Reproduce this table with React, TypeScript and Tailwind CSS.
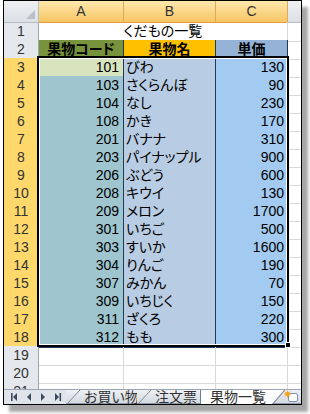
import React from 'react'

// 果物一覧 sheet
const fruits: [number, string, number][] = [
  [101, 'びわ', 130],
  [103, 'さくらんぼ', 90],
  [104, 'なし', 230],
  [108, 'かき', 170],
  [201, 'バナナ', 310],
  [203, 'パイナップル', 900],
  [206, 'ぶどう', 600],
  [208, 'キウイ', 130],
  [209, 'メロン', 1700],
  [301, 'いちご', 500],
  [303, 'すいか', 1600],
  [304, 'りんご', 190],
  [307, 'みかん', 70],
  [309, 'いちじく', 150],
  [311, 'ざくろ', 220],
  [312, 'もも', 300],
]

const ROW = 'grid grid-cols-[35px_85px_92px_72px_13px] h-[18px] shrink-0'

function RowHead({ n, sel }: { n: number; sel?: boolean }) {
  return (
    <div
      className={
        sel
          ? 'text-center leading-[19px] border-r border-b border-r-[#e8a23e] border-b-[#e2b552] bg-[#fed86a] text-[#333]'
          : 'text-center leading-[19px] border-r border-b border-r-[#9aa6b4] border-b-[#bcc4ce] bg-[#e4e7ec] text-[#333]'
      }
    >
      {n}
    </div>
  )
}

function BlankRow({ n }: { n: number }) {
  return (
    <div className={ROW}>
      <RowHead n={n} />
      <div className="border-r border-b border-[#d9d9d9]" />
      <div className="border-r border-b border-[#d9d9d9]" />
      <div className="border-r border-b border-[#d9d9d9]" />
      <div className="border-b border-[#d9d9d9]" />
    </div>
  )
}

function Tab({ label, className }: { label: string; className: string }) {
  return (
    <div className={'relative h-full shrink-0 whitespace-nowrap bg-gradient-to-b from-[#eef1f5] to-[#d3d9e1] border-b border-[#8e9aab] text-[#333] leading-[14px] ' + className}>
      <svg className="absolute left-0 top-0" width="16" height="14">
        <line x1="1" y1="14" x2="14" y2="0" stroke="#7f8b9b" strokeWidth="1" />
      </svg>
      {label}
    </div>
  )
}

export default function App() {
  return (
    <div className="w-[310px] h-[414px] bg-white pl-[3px] overflow-hidden font-['Liberation_Sans','Noto_Sans_CJK_JP',sans-serif] [font-feature-settings:'palt'] text-[14px]">
      <div className="relative w-[299px] h-[405px] border border-black flex flex-col bg-white shadow-[6px_7px_3px_rgba(0,0,0,0.35)]">
        {/* column headers */}
        <div className="grid grid-cols-[35px_85px_92px_72px_13px] h-[21px] shrink-0">
          <div className="relative bg-gradient-to-b from-[#eef0f3] to-[#dce0e5] border-r border-b border-[#b4bcc6]">
            <svg className="absolute right-[3px] bottom-[3px]" width="9" height="9">
              <polygon points="9,0 9,9 0,9" fill="#b9c0c9" />
            </svg>
          </div>
          {['A', 'B', 'C'].map((l) => (
            <div
              key={l}
              className="text-center leading-[21px] bg-gradient-to-b from-[#fde7ac] to-[#f7c662] border-r border-b border-r-[#dcaa58] border-b-[#e69b3c] text-[#333]"
            >
              {l}
            </div>
          ))}
          <div className="bg-gradient-to-b from-[#eef0f3] to-[#dce0e5] border-b border-[#b4bcc6]" />
        </div>

        {/* row 1 */}
        <div className={ROW}>
          <RowHead n={1} />
          <div className="col-span-3 text-center leading-[19px] border-r border-b border-r-[#d9d9d9] border-b-[#1e3a5f] text-black">
            くだもの一覧
          </div>
          <div className="border-b border-[#d9d9d9]" />
        </div>

        {/* row 2 */}
        <div className={ROW}>
          <RowHead n={2} />
          <div className="bg-[#77933c] text-center font-bold leading-[19px] border-r border-b border-[#1e3a5f] text-black">果物コード</div>
          <div className="bg-[#ffc000] text-center font-bold leading-[19px] border-r border-b border-b-[#2f5fc8] border-r-[#1e3a5f] text-black">果物名</div>
          <div className="bg-[#95b3d7] text-center font-bold leading-[19px] border-r border-b border-[#1e3a5f] text-black">単価</div>
          <div className="border-b border-[#d9d9d9]" />
        </div>

        {fruits.map(([code, name, price], i) => (
          <div key={code} className={ROW}>
            <RowHead n={i + 3} sel />
            <div
              className={
                i === 0
                  ? 'bg-[#d7e4bd] text-right pr-[4px] leading-[19px] border-r border-b border-[#1e3a5f] text-black'
                  : 'bg-[#9fc5cf] text-right pr-[4px] leading-[19px] border-r border-b border-[#1e3a5f] text-black'
              }
            >
              {code}
            </div>
            <div className="bg-[#b8cce3] text-left pl-[2px] leading-[19px] border-r border-b border-[#1e3a5f] text-black whitespace-nowrap">
              {name}
            </div>
            <div className="bg-[#a3caf1] text-right pr-[3px] leading-[19px] border-r border-b border-[#1e3a5f] text-black">{price}</div>
            <div className="border-b border-[#d9d9d9]" />
          </div>
        ))}

        <BlankRow n={19} />
        <BlankRow n={20} />
        <div className="flex-1 min-h-0 overflow-hidden">
          <BlankRow n={21} />
        </div>

        {/* sheet tabs */}
        <div className="flex h-[15px] shrink-0 bg-[#dfe4eb] border-t border-[#9aa5b3]">
          <div className="w-[62px] shrink-0 h-full">
            <svg width="62" height="14">
              <rect x="7" y="3" width="1.6" height="8" fill="#3c4a5e" />
              <polygon points="13,3 9,7 13,11" fill="#3c4a5e" />
              <polygon points="27,3 23,7 27,11" fill="#3c4a5e" />
              <polygon points="37,3 41,7 37,11" fill="#3c4a5e" />
              <polygon points="51,3 55,7 51,11" fill="#3c4a5e" />
              <rect x="55.5" y="3" width="1.6" height="8" fill="#3c4a5e" />
            </svg>
          </div>
          <Tab label="お買い物" className="w-[71px] pl-[18px]" />
          <Tab label="注文票" className="w-[63px] pl-[18px]" />
          <div className="h-full w-[84px] shrink-0 whitespace-nowrap bg-white border-l border-[#6f7b8b] pl-[9px] leading-[14px] text-[#333]">果物一覧</div>
          <div className="relative h-full w-[29px] shrink-0 -ml-[12px] bg-gradient-to-b from-[#eef1f5] to-[#d3d9e1] border-b border-[#8e9aab] [clip-path:polygon(0_100%,12px_0,100%_0,100%_100%)]">
            <svg className="absolute left-0 top-0" width="29" height="14">
              <line x1="0.5" y1="14" x2="12.5" y2="0" stroke="#7f8b9b" strokeWidth="1.5" />
              <rect x="16.5" y="3.5" width="9" height="8" rx="1.5" fill="#fff" stroke="#7d93b3" />
              <circle cx="15.5" cy="4" r="2.2" fill="#f7a21b" />
              <path d="M15.5 0.5v7M12 4h7M13 1.5l5 5M18 1.5l-5 5" stroke="#f7a21b" strokeWidth="0.9" />
            </svg>
          </div>
        </div>

        {/* selection A3:C18 */}
        <div className="absolute left-[33px] top-[55px] w-[252px] h-[291px] border-2 border-black shadow-[inset_0_0_0_1px_#fff] pointer-events-none" />
        <div className="absolute left-[281px] top-[341px] w-[6px] h-[6px] bg-black border border-white" />
      </div>
    </div>
  )
}
